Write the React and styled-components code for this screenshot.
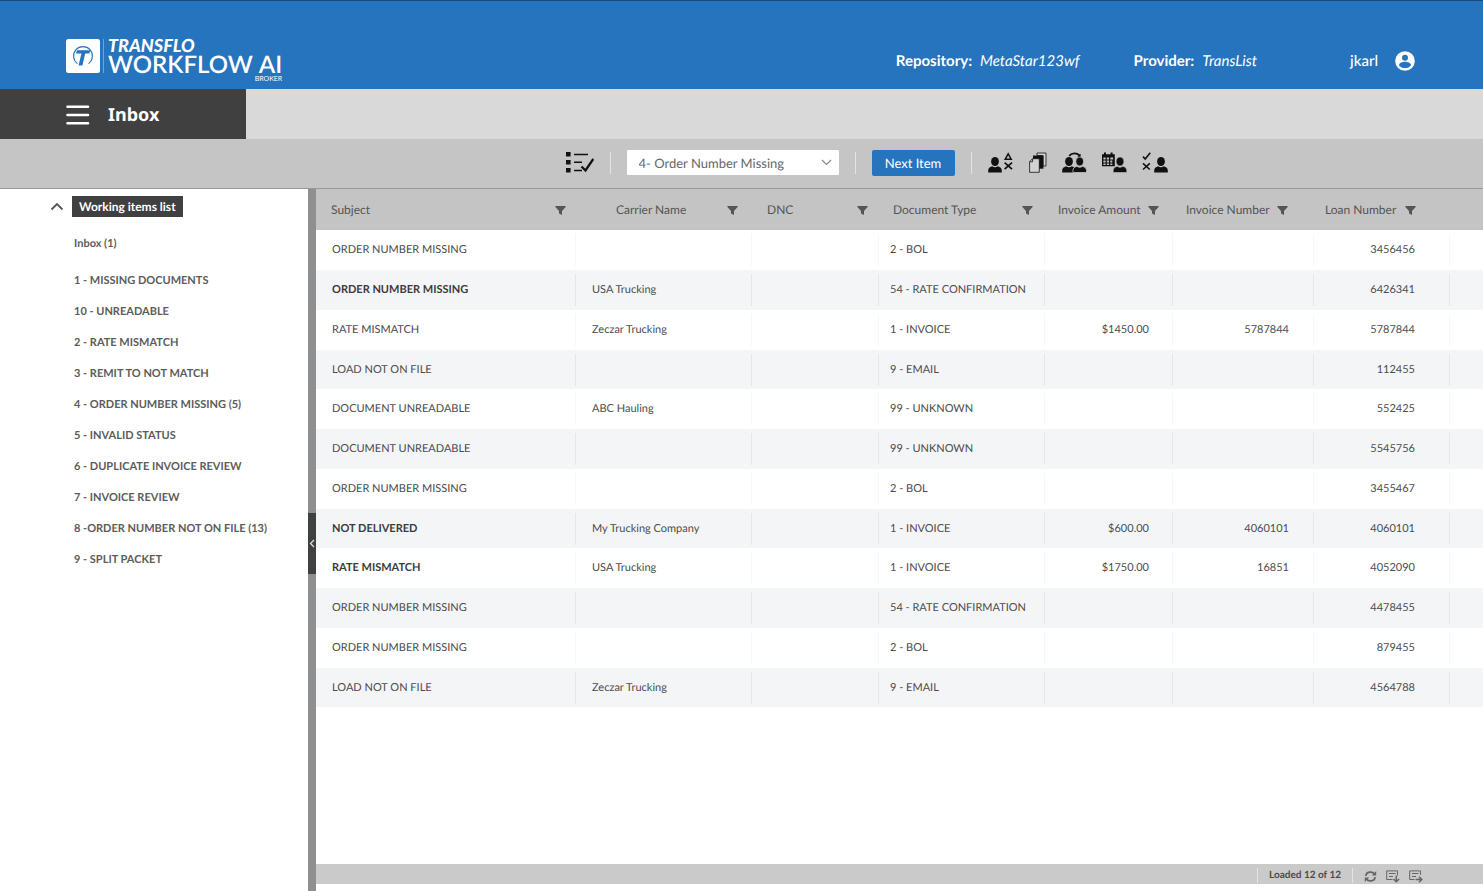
import React from "react";
import styled, { createGlobalStyle } from "styled-components";

const GlobalStyle = createGlobalStyle`
  * { box-sizing: border-box; }
  body {
    margin: 0;
    font-family: Lato, "Open Sans", sans-serif;
    color: #555;
    background: #fff;
    text-rendering: geometricPrecision;
  }
  button, select { font-family: inherit; text-rendering: inherit; }
`;

const Page = styled.div`
  min-height: 100vh;
  display: flex;
  flex-direction: column;
`;

const Header = styled.header`
  height: 89px;
  flex: none;
  display: flex;
  justify-content: space-between;
  align-items: flex-start;
  padding: 36px 68px 0 66px;
  color: #fff;
  background: #2574bd;
  border-top: 1px solid #1b4a78;
`;

const Brand = styled.a`
  display: flex;
  color: #fff;
  text-decoration: none;
`;

const BrandMark = styled.svg`
  width: 38px;
  height: 36px;
  margin: 2px 4px 0 0;
`;

const BrandText = styled.span`
  display: flex;
  flex-direction: column;
`;

const BrandTop = styled.span`
  font: italic 900 18px/17px Lato, sans-serif;
`;

const BrandName = styled.span`
  display: flex;
  gap: 6px;
  font: 600 24px/21px Lato, sans-serif;
  white-space: nowrap;
`;

const BrandEdition = styled.span`
  align-self: flex-end;
  font-size: 7px;
  line-height: 9px;
`;

const Account = styled.div`
  display: flex;
  align-items: center;
  height: 24px;
  margin-top: 12px;
  font-size: 15px;
  white-space: nowrap;
`;

const Fact = styled.span`
  margin-right: ${(p) => p.$gap}px;
  b { margin-right: 8px; }
`;

const UserButton = styled.button`
  display: flex;
  align-items: center;
  gap: 17px;
  padding: 0;
  border: 0;
  color: inherit;
  background: none;
  font-size: 15px;
  font-weight: 500;
`;

const TitleBar = styled.div`
  height: 50px;
  flex: none;
  display: flex;
  background: #d9d9d9;
`;

const TitleTab = styled.div`
  width: 246px;
  display: flex;
  align-items: center;
  gap: 18px;
  padding: 2px 0 0 66px;
  color: #fff;
  background: #404040;
`;

const MenuButton = styled.button`
  display: flex;
  padding: 0;
  border: 0;
  color: #fff;
  background: none;
`;

const Title = styled.h1`
  margin: 0;
  font: 700 18px/24px "Noto Sans", sans-serif;
`;

const Toolbar = styled.div`
  height: 50px;
  flex: none;
  display: flex;
  align-items: center;
  justify-content: center;
  gap: 16px;
  padding: 0 0 2px 250px;
  background: #c5c5c5;
  border-bottom: 1px solid #999;
`;

const Separator = styled.span`
  width: 1px;
  height: ${(p) => p.$size || 22}px;
  background: #e4e4e4;
`;

const SelectBox = styled.div`
  position: relative;
  width: 212px;
  color: #888;
  svg {
    position: absolute;
    right: 7px;
    top: 9px;
    pointer-events: none;
  }
`;

const QueueSelect = styled.select`
  appearance: none;
  display: block;
  width: 100%;
  height: 25px;
  padding: 0 24px 0 12px;
  border: 0;
  border-radius: 1px;
  color: #666;
  background: #fff;
  font-size: 13px;
`;

const NextButton = styled.button`
  width: 83px;
  height: 26px;
  padding: 0;
  border: 0;
  border-radius: 2px;
  color: #fff;
  background: #2574bd;
  font-size: 13px;
`;

const IconRow = styled.div`
  display: flex;
  gap: 15px;
`;

const IconButton = styled.button`
  display: flex;
  padding: 0;
  border: 0;
  color: ${(p) => (p.$muted ? "#666" : "#111")};
  background: none;
`;

const Body = styled.div`
  flex: 1;
  display: flex;
`;

const Sidebar = styled.nav`
  width: 308px;
  flex: none;
  padding: 7px 0 0 50px;
`;

const GroupHeader = styled.button`
  display: flex;
  align-items: center;
  gap: 8px;
  padding: 0;
  border: 0;
  color: #555;
  background: none;
`;

const GroupLabel = styled.span`
  padding: 0 7px;
  color: #fff;
  background: #404040;
  font-size: 12px;
  font-weight: 700;
  line-height: 21px;
`;

const QueueList = styled.ul`
  margin: 19px 0 0 24px;
  padding: 0;
  list-style: none;
`;

const QueueItem = styled.li`
  height: ${(p) => (p.$first ? 37 : 31)}px;
  line-height: 16px;
  font-size: 11px;
  font-weight: 700;
  a {
    color: #5c5c5c;
    text-decoration: none;
  }
`;

const Divider = styled.div`
  width: 8px;
  flex: none;
  display: flex;
  flex-direction: column;
  justify-content: center;
  padding-top: 6px;
  background: #8f8f8f;
`;

const CollapseButton = styled.button`
  height: 61px;
  display: flex;
  align-items: center;
  justify-content: center;
  padding: 0;
  border: 0;
  color: #ddd;
  background: #404040;
`;

const Main = styled.main`
  flex: 1;
  min-width: 0;
  display: flex;
  flex-direction: column;
  padding-bottom: 7px;
`;

const TableArea = styled.div`
  flex: 1;
  overflow-x: auto;
`;

const Table = styled.table`
  width: 100%;
  min-width: 1160px;
  table-layout: fixed;
  border-collapse: collapse;
  font-size: 11px;
  line-height: 16px;
`;

const HeadCell = styled.th`
  width: ${(p) => (p.$width ? `${p.$width}px` : "auto")};
  height: 41px;
  padding: 0 ${(p) => p.$right || 0}px 0 ${(p) => p.$left || 0}px;
  font-size: 12px;
  font-weight: 400;
  text-align: left;
  white-space: nowrap;
  color: #555;
  background: #c4c4c4;
`;

const HeadContent = styled.div`
  display: flex;
  align-items: center;
  justify-content: space-between;
`;

const FilterButton = styled.button`
  display: flex;
  padding: 2px 0 0;
  border: 0;
  color: #555;
  background: none;
`;

const Row = styled.tr`
  height: 40px;
  &:nth-child(even) { background: #f4f5f7; }
  &:nth-child(4n) { height: 39px; }
`;

const Cell = styled.td`
  padding: 0 ${(p) => p.$right || 0}px 0 ${(p) => p.$left || 0}px;
  text-align: ${(p) => (p.$right ? "right" : "left")};
  font-weight: ${(p) => (p.$bold ? 700 : 400)};
  color: ${(p) => (p.$bold ? "#3c3c3c" : "#4c4c4c")};
  white-space: nowrap;
  &:not(:first-child) {
    background: linear-gradient(#e6e7e9, #e6e7e9) left center / 1px 32px no-repeat;
  }
  ${Row}:nth-child(odd) &:not(:first-child) {
    background-image: linear-gradient(#f7f7f7, #f7f7f7);
  }
`;

const Footer = styled.footer`
  height: 20px;
  display: flex;
  align-items: center;
  justify-content: flex-end;
  gap: 11px;
  padding: 2px 60px 0 0;
  color: #4a4a4a;
  background: #cacaca;
  font-size: 10px;
  font-weight: 700;
`;

const FooterIcons = styled.div`
  display: flex;
  gap: 9px;
  padding-top: 2px;
`;

const columns = [
  { name: "Subject", width: 259, left: 15, right: 9 },
  { name: "Carrier Name", width: 176, left: 41, right: 13 },
  { name: "DNC", width: 127, left: 16, right: 10 },
  { name: "Document Type", width: 166, left: 15, right: 11 },
  { name: "Invoice Amount", width: 128, left: 14, right: 13 },
  { name: "Invoice Number", width: 141, left: 14, right: 25 },
  { name: "Loan Number", width: 136, left: 12, right: 33 },
];

const rows = [
  ["ORDER NUMBER MISSING", "", "2 - BOL", "", "", "3456456"],
  ["ORDER NUMBER MISSING", "USA Trucking", "54 - RATE CONFIRMATION", "", "", "6426341", true],
  ["RATE MISMATCH", "Zeczar Trucking", "1 - INVOICE", "$1450.00", "5787844", "5787844"],
  ["LOAD NOT ON FILE", "", "9 - EMAIL", "", "", "112455"],
  ["DOCUMENT UNREADABLE", "ABC Hauling", "99 - UNKNOWN", "", "", "552425"],
  ["DOCUMENT UNREADABLE", "", "99 - UNKNOWN", "", "", "5545756"],
  ["ORDER NUMBER MISSING", "", "2 - BOL", "", "", "3455467"],
  ["NOT DELIVERED", "My Trucking Company", "1 - INVOICE", "$600.00", "4060101", "4060101", true],
  ["RATE MISMATCH", "USA Trucking", "1 - INVOICE", "$1750.00", "16851", "4052090", true],
  ["ORDER NUMBER MISSING", "", "54 - RATE CONFIRMATION", "", "", "4478455"],
  ["ORDER NUMBER MISSING", "", "2 - BOL", "", "", "879455"],
  ["LOAD NOT ON FILE", "Zeczar Trucking", "9 - EMAIL", "", "", "4564788"],
];

const queues = [
  "Inbox (1)",
  "1 - MISSING DOCUMENTS",
  "10 - UNREADABLE",
  "2 - RATE MISMATCH",
  "3 - REMIT TO NOT MATCH",
  "4 - ORDER NUMBER MISSING (5)",
  "5 - INVALID STATUS",
  "6 - DUPLICATE INVOICE REVIEW",
  "7 - INVOICE REVIEW",
  "8 -ORDER NUMBER NOT ON FILE (13)",
  "9 - SPLIT PACKET",
];

const Person = ({ x }) => (
  <g transform={`translate(${x} 0)`} fill="currentColor">
    <ellipse cx="0" cy="9.5" rx="3.9" ry="4.5" />
    <path d="M-6.8 20.5v-2c0-2.2 1.4-3.4 4-4.2 1.8 1.3 3.8 1.3 5.6 0 2.6.8 4 2 4 4.2v2z" />
  </g>
);

const ListCheckIcon = () => (
  <svg width="28" height="22" viewBox="0 0 28 22" fill="none" stroke="currentColor">
    <path d="M0 0h4.6v4.6H0zM0 8h4.6v4.6H0zM0 16h4.6v4.6H0z" fill="currentColor" stroke="none" />
    <path d="M8 2.5h14M8 10.3h8M8 18.5h8" strokeWidth="1.6" />
    <path d="M15.5 14.5l4 4L27.3 7" strokeWidth="2.3" />
  </svg>
);

const PersonShapesIcon = () => (
  <svg width="26" height="22" viewBox="0 0 26 22" fill="none" stroke="currentColor">
    <g stroke="none"><Person x={7} /></g>
    <path d="M20.2 1.8l3 5.4h-6z" strokeWidth="1.5" />
    <path d="M16.6 10.6l7.4 6.6M24 10.6l-7.4 6.6" strokeWidth="1.7" />
  </svg>
);

const PagesIcon = () => (
  <svg width="18" height="22" viewBox="0 0 18 22">
    <path d="M8 1h9v13h-3V3.500H8z" fill="#d2d2d2" stroke="currentColor" strokeWidth=".8" />
    <path d="M4 3.500h10.400v13.200H4z" fill="currentColor" />
    <path d="M3.500 6.700h6.800v13.600H.6V9.700z" fill="#d2d2d2" stroke="currentColor" strokeWidth=".8" />
    <path d="M.8 9.800h2.800V7" fill="none" stroke="currentColor" strokeWidth=".8" />
  </svg>
);

const PeopleSwapIcon = () => (
  <svg width="25" height="22" viewBox="0 0 25 22">
    <Person x={7} />
    <g stroke="#c5c5c5" strokeWidth=".8"><Person x={17.7} /></g>
    <path d="M7.200 3.800C10 .6 14.600.6 17.600 3.500" fill="none" stroke="currentColor" strokeWidth="1.800" />
    <path d="M18.600 1.800v3h-3.200z" fill="currentColor" />
  </svg>
);

const CalendarPersonIcon = () => (
  <svg width="25" height="22" viewBox="0 0 25 22">
    <path d="M0 2.200h2V.5h2v1.700h4.600V.5h2v1.700h2.200v12H0z" fill="currentColor" />
    <path d="M1.400 5.600h2.200v1.900H1.400zM4.800 5.600H7v1.900H4.800zM8.300 5.600h2.800v1.900H8.300zM1.400 8.600h2.200v1.800H1.400zM4.800 8.600H7v1.800H4.800zM8.300 8.600h2v1.800h-2zM1.400 11.400h2.200v1.500H1.400zM4.800 11.400H7v1.500H4.800zM8.300 11.400h2v1.500h-2z" fill="#c5c5c5" />
    <g stroke="#c5c5c5" strokeWidth=".6"><Person x={18} /></g>
  </svg>
);

const ChecksPersonIcon = () => (
  <svg width="26" height="22" viewBox="0 0 26 22" fill="none" stroke="currentColor">
    <path d="M1 4.600l2.200 2.400L8.300.8" strokeWidth="1.600" />
    <path d="M1 11.300l6.800 6.200M7.800 11.300L1 17.500" strokeWidth="1.600" />
    <g stroke="none"><Person x={19} /></g>
  </svg>
);

const Chevron = ({ width, height, d, weight }) => (
  <svg width={width} height={height} viewBox={`0 0 ${width} ${height}`} fill="none" stroke="currentColor" strokeWidth={weight}>
    <path d={d} />
  </svg>
);

const FilterIcon = () => (
  <svg width="11" height="9" viewBox="0 0 11 9">
    <path d="M.4 0h10.200v1L7 5v4L4 7.600V5L.4 1z" fill="currentColor" />
  </svg>
);

const RefreshIcon = () => (
  <svg width="13" height="13" viewBox="0 0 13 13" fill="none" stroke="currentColor" strokeWidth="1.700">
    <path d="M1.800 5.800C2.200 1.800 8 .8 10.600 4M11.200 7.200C10.800 11.200 5 12.200 2.400 9" />
    <path d="M12.200 1v4.600H7.800zM.8 12V7.400h4.400z" fill="currentColor" stroke="none" />
  </svg>
);

const ListDownIcon = () => (
  <svg width="14" height="13" viewBox="0 0 14 13" fill="none" stroke="currentColor">
    <path d="M6.500 9.500h-5.800V.9h10.800v4.600M3 3.500h6.500M3 6.500h4" />
    <path d="M10.300 5.500v6M7.500 9l2.800 2.800L13.100 9" strokeWidth="1.500" />
  </svg>
);

const ListRightIcon = () => (
  <svg width="14" height="13" viewBox="0 0 14 13" fill="none" stroke="currentColor">
    <path d="M5.500 9.500H.7V.9h10.800v4M3 3.500h6.500M3 6.500h4" />
    <path d="M6.500 9.500h6M10 6.700l2.800 2.800-2.800 2.800" strokeWidth="1.500" />
  </svg>
);

const tools = [
  ["Reassign item", PersonShapesIcon],
  ["Copy documents", PagesIcon],
  ["Transfer item", PeopleSwapIcon],
  ["Schedule item", CalendarPersonIcon],
  ["Approve or reject", ChecksPersonIcon],
];

const footerTools = [
  ["Refresh", RefreshIcon],
  ["Load more", ListDownIcon],
  ["Load all", ListRightIcon],
];

export default function App() {
  return (
    <Page>
      <GlobalStyle />
      <Header>
        <Brand href="#">
          <BrandMark viewBox="0 0 38 36">
            <rect width="34" height="34" rx="2.500" fill="#fff" />
            <path d="M11.500 24.600A9.400 9.400 0 1 1 22.500 24.600" fill="none" stroke="#2574bd" strokeWidth="1.100" />
            <path d="M10.800 11.200h13.400l-.8 3.200h-4.200l-2.800 12h-3.800l2.800-12h-5.400z" fill="#2574bd" />
            <path d="M37.500 0v34" stroke="#6ea4d6" />
          </BrandMark>
          <BrandText>
            <BrandTop>TRANSFLO</BrandTop>
            <BrandName><span>WORKFLOW</span><span>AI</span></BrandName>
            <BrandEdition>BROKER</BrandEdition>
          </BrandText>
        </Brand>
        <Account>
          <Fact $gap={54}><b>Repository:</b><i>MetaStar123wf</i></Fact>
          <Fact $gap={93}><b>Provider:</b><i>TransList</i></Fact>
          <UserButton>
            jkarl
            <svg width="20" height="20" viewBox="0 0 20 20">
              <circle cx="10" cy="10" r="9.800" fill="#fff" />
              <circle cx="10" cy="6.800" r="3" fill="#2574bd" />
              <path d="M4 14.200c.4-2.400 3.400-3.400 6-3.400s5.600 1 6 3.400c-1.400 1.900-3.600 2.900-6 2.900s-4.600-1-6-2.900z" fill="#2574bd" />
            </svg>
          </UserButton>
        </Account>
      </Header>
      <TitleBar>
        <TitleTab>
          <MenuButton aria-label="Menu">
            <svg width="24" height="20" viewBox="0 0 24 20" stroke="currentColor" strokeWidth="2.600" strokeLinecap="round">
              <path d="M1.500 1.800h20.500M1.500 10h20.500M1.500 18.200h20.500" />
            </svg>
          </MenuButton>
          <Title>Inbox</Title>
        </TitleTab>
      </TitleBar>
      <Toolbar>
        <IconButton aria-label="Select items"><ListCheckIcon /></IconButton>
        <Separator />
        <SelectBox>
          <QueueSelect aria-label="Queue">
            <option>4- Order Number Missing</option>
          </QueueSelect>
          <Chevron width={11} height={7} d="M1 1l4.500 4.500L10 1" weight={1.2} />
        </SelectBox>
        <Separator />
        <NextButton>Next Item</NextButton>
        <Separator />
        <IconRow>
          {tools.map(([label, Icon]) => (
            <IconButton key={label} aria-label={label}><Icon /></IconButton>
          ))}
        </IconRow>
      </Toolbar>
      <Body>
        <Sidebar>
          <GroupHeader>
            <Chevron width={14} height={9} d="M1.500 7.500L7 2l5.500 5.500" weight={1.8} />
            <GroupLabel>Working items list</GroupLabel>
          </GroupHeader>
          <QueueList>
            {queues.map((name, i) => (
              <QueueItem key={name} $first={i === 0}><a href="#">{name}</a></QueueItem>
            ))}
          </QueueList>
        </Sidebar>
        <Divider>
          <CollapseButton aria-label="Collapse sidebar">
            <Chevron width={6} height={9} d="M5 1L1.500 4.500 5 8" weight={1.3} />
          </CollapseButton>
        </Divider>
        <Main>
          <TableArea>
            <Table>
              <thead>
                <tr>
                  {columns.map((c) => (
                    <HeadCell key={c.name} $width={c.width} $left={c.left} $right={c.right}>
                      <HeadContent>
                        {c.name}
                        <FilterButton aria-label={`Filter ${c.name}`}><FilterIcon /></FilterButton>
                      </HeadContent>
                    </HeadCell>
                  ))}
                  <HeadCell as="td" />
                </tr>
              </thead>
              <tbody>
                {rows.map(([subject, carrier, type, amount, invoice, loan, unread], i) => (
                  <Row key={i}>
                    <Cell $left={16} $bold={unread}>{subject}</Cell>
                    <Cell $left={17}>{carrier}</Cell>
                    <Cell />
                    <Cell $left={12}>{type}</Cell>
                    <Cell $right={23}>{amount}</Cell>
                    <Cell $right={24}>{invoice}</Cell>
                    <Cell $right={34}>{loan}</Cell>
                    <Cell />
                  </Row>
                ))}
              </tbody>
            </Table>
          </TableArea>
          <Footer>
            <Separator $size={15} />
            <span>Loaded 12 of 12</span>
            <Separator $size={15} />
            <FooterIcons>
              {footerTools.map(([label, Icon]) => (
                <IconButton key={label} $muted aria-label={label}><Icon /></IconButton>
              ))}
            </FooterIcons>
          </Footer>
        </Main>
      </Body>
    </Page>
  );
}
